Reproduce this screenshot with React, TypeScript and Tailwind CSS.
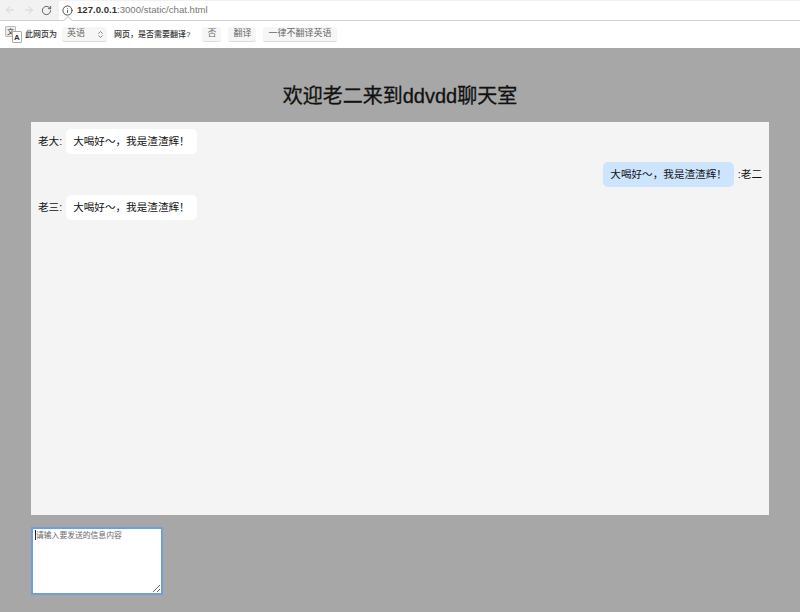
import { ArrowLeft, ArrowRight, RotateCw, Info, ChevronsUpDown } from 'lucide-react';

const font = { fontFamily: '"Liberation Sans", "Noto Sans CJK SC", sans-serif' };

function Bubble({ mine }: { mine?: boolean }) {
  return (
    <div className={`h-[25px] px-[7px] mx-[4px] rounded-[5px] flex items-center text-[10.6px] text-[#111] ${mine ? 'bg-[#cde4fd]' : 'bg-white'}`}>
      大喝好～，我是渣渣辉！
    </div>
  );
}

function InfoButton({ label }: { label: string }) {
  return (
    <div className="h-[15px] px-[5px] flex items-center rounded-[3px] bg-[#f6f6f6] border-b border-[#dcdcdc] text-[9px] text-[#666]">
      {label}
    </div>
  );
}

export default function App() {
  return (
    <div className="w-[800px] h-[612px] overflow-hidden flex flex-col bg-[#a7a7a7]" style={font}>
      <div className="relative h-[21px] bg-[#f2f2f2] flex items-center pl-[4px] border-b border-[#d0d0d0]">
        <ArrowLeft size={12} className="text-[#d4d4d4]" />
        <ArrowRight size={12} className="text-[#d4d4d4] ml-[7px]" />
        <RotateCw size={11} className="text-[#555] ml-[6px]" />
        <div className="ml-[7px] flex-1 h-[19px] bg-white flex items-center pl-[3px] text-[9.6px] text-[#777]">
          <Info size={11} className="text-[#444] mr-[4px]" />
          <span className="font-bold text-[#333]">127.0.0.1</span>
          <span>:3000/static/chat.html</span>
        </div>
        <div className="absolute left-[65px] top-[17px] w-[6px] h-[6px] rotate-45 bg-white border-l border-t border-[#d0d0d0]" />
      </div>

      <div className="h-[27px] bg-white flex items-center text-[8px] text-[#333]">
        <div className="relative w-[21px] h-[20px] ml-[4px]">
          <div className="absolute left-[1px] top-[1px] w-[11px] h-[11px] bg-[#eee] border border-[#bbb] text-[7px] leading-[9px] text-center rounded-[1px]">文</div>
          <div className="absolute left-[8px] top-[6px] w-[10px] h-[12px] bg-white border border-[#aaa] text-[8px] font-bold leading-[11px] text-center rounded-[1px]">A</div>
        </div>
        <span className="font-medium">此网页为</span>
        <div className="ml-[5px] w-[45px] h-[15px] rounded-[3px] bg-[#f6f6f6] border-b border-[#dcdcdc] flex items-center justify-between pl-[5px] pr-[2px] text-[#666] text-[9px]">
          英语
          <ChevronsUpDown size={9} />
        </div>
        <span className="ml-[7px] font-medium">网页，是否需要翻译?</span>
        <div className="ml-[12px] flex gap-[7px]">
          <InfoButton label="否" />
          <InfoButton label="翻译" />
          <InfoButton label="一律不翻译英语" />
        </div>
      </div>

      <div className="flex-1 px-[31px] flex flex-col">
        <h1 className="mt-[35px] h-[27px] leading-[27px] text-center text-[20px] text-[#111] [-webkit-text-stroke:0.3px_#111]">
          欢迎老二来到ddvdd聊天室
        </h1>
        <div className="mt-[12px] h-[393px] bg-[#f4f4f4] px-[7px] pt-[7px] flex flex-col gap-[8px] text-[10.6px] text-[#111]">
          <div className="flex items-center">
            <span>老大:</span>
            <Bubble />
          </div>
          <div className="flex items-center justify-end">
            <Bubble mine />
            <span>:老二</span>
          </div>
          <div className="flex items-center">
            <span>老三:</span>
            <Bubble />
          </div>
        </div>
        <div className="relative mt-[12px] w-[132px] h-[68px]">
          <textarea
            placeholder="请输入要发送的信息内容"
            className="w-full h-full bg-white border-2 border-[#6a9fe0] pl-[3px] pt-[1px] text-[7.8px] leading-[11px] outline-none placeholder:text-[#666]"
          />
          <div className="absolute left-[4px] top-[3px] w-px h-[10px] bg-[#222]" />
        </div>
      </div>
    </div>
  );
}
